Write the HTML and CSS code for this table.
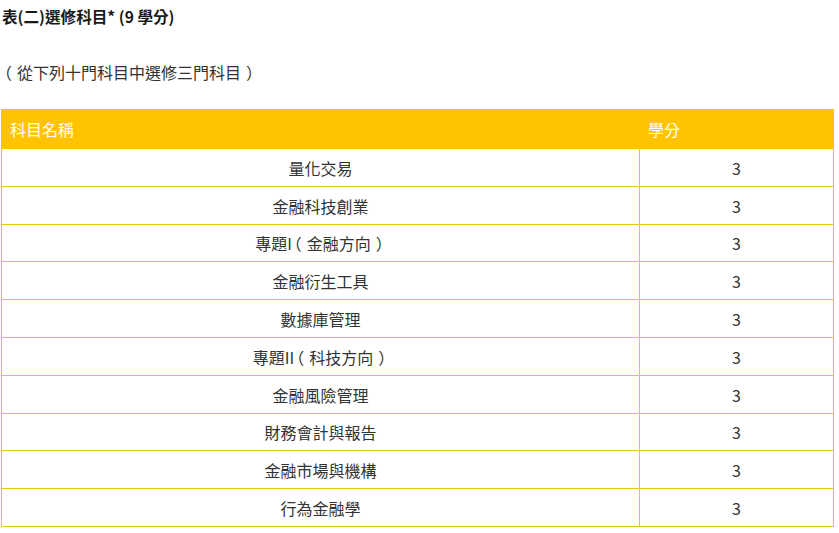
FILE: index.html
```html
<!DOCTYPE html>
<html lang="zh-Hant">
<head>
<meta charset="utf-8">
<title>選修科目</title>
<link rel="stylesheet" href="styles.css">
</head>
<body>
<div class="page">
  <p class="title">表(二)選修科目* (9 學分)</p>
  <p class="note"><span class="po">（</span>從下列十門科目中選修三門科目<span class="pc">）</span></p>
  <table class="courses">
    <colgroup><col class="col-name"><col class="col-credit"></colgroup>
    <thead>
      <tr><th>科目名稱</th><th>學分</th></tr>
    </thead>
    <tbody>
      <tr><td>量化交易</td><td>3</td></tr>
      <tr><td>金融科技創業</td><td>3</td></tr>
      <tr><td>專題I<span class="po">（</span>金融方向<span class="pc">）</span></td><td>3</td></tr>
      <tr><td>金融衍生工具</td><td>3</td></tr>
      <tr><td>數據庫管理</td><td>3</td></tr>
      <tr><td>專題II<span class="po">（</span>科技方向<span class="pc">）</span></td><td>3</td></tr>
      <tr><td>金融風險管理</td><td>3</td></tr>
      <tr><td>財務會計與報告</td><td>3</td></tr>
      <tr><td>金融市場與機構</td><td>3</td></tr>
      <tr><td>行為金融學</td><td>3</td></tr>
    </tbody>
  </table>
</div>
</body>
</html>
```
FILE: styles.css
```css
html, body {
  margin: 0;
  padding: 0;
  background: #ffffff;
}
.page {
  padding: 0 0 0 1px;
  font-family: "Noto Sans CJK TC", "Noto Sans", "Liberation Sans", sans-serif;
  font-size: 16px;
  color: #333333;
  text-spacing-trim: space-all;
}
.title {
  margin: 4px 0 0 1px;
  line-height: 24px;
  font-weight: bold;
  font-size: 15.6px;
  color: #1a1a1a;
}
.note {
  margin: 32px 0 0 1px;
  line-height: 24px;
  color: #333333;
}
.po {
  font-feature-settings: "halt";
  padding-left: 2px;
  padding-right: 5px;
}
.pc {
  font-feature-settings: "halt";
  padding-left: 5px;
  padding-right: 2px;
}
.courses {
  margin-top: 25px;
  width: 833px;
  border-collapse: separate;
  border-spacing: 0;
  border-left: 1px solid #ebc816;
  table-layout: fixed;
}
.col-name {
  width: 638px;
}
.courses thead tr {
  height: 40px;
}
.courses th {
  background: #ffc300;
  color: #ffffff;
  font-weight: normal;
  text-align: left;
  padding: 0 0 0 8px;
}
.courses tbody tr {
  height: 38px;
}
.courses tbody tr:nth-child(3),
.courses tbody tr:nth-child(8) {
  height: 37px;
}
.courses td {
  padding: 0;
  text-align: center;
  border-right: 1px solid #ebc816;
  border-bottom: 1px solid #ebc816;
  color: #333333;
}
```
